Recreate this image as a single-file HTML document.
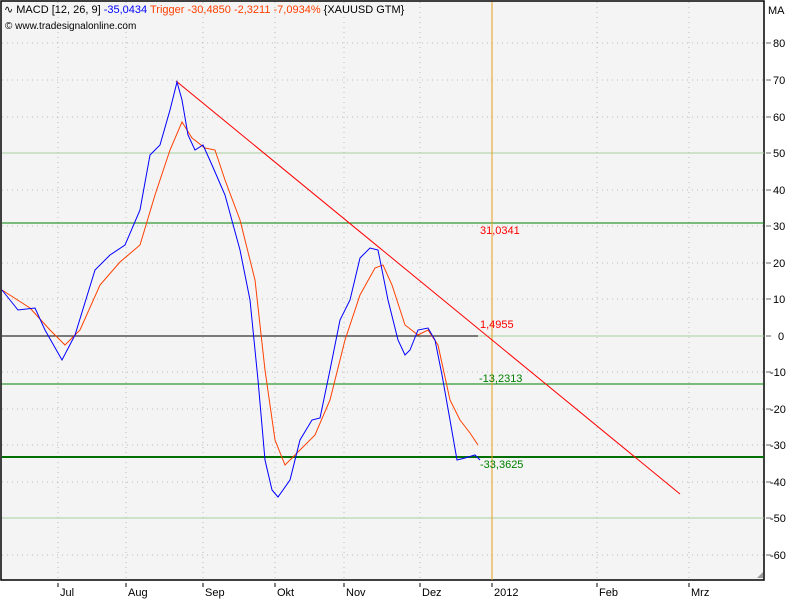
<!DOCTYPE html><html><head><style>body{margin:0;background:#fff;width:800px;height:600px;overflow:hidden;font-family:"Liberation Sans",sans-serif}</style></head><body>
<svg width="800" height="600" xmlns="http://www.w3.org/2000/svg" font-family="Liberation Sans, sans-serif" font-size="11">
<rect x="0" y="0" width="800" height="600" fill="#fff"/>
<rect x="1" y="1" width="763" height="579" fill="#f4f4f4" stroke="#000" stroke-width="1.5"/>
<g stroke="#bbb" stroke-dasharray="1,4">
<line x1="2" x2="764" y1="43" y2="43"/><line x1="2" x2="764" y1="80" y2="80"/><line x1="2" x2="764" y1="117" y2="117"/><line x1="2" x2="764" y1="190" y2="190"/><line x1="2" x2="764" y1="263" y2="263"/><line x1="2" x2="764" y1="299" y2="299"/><line x1="2" x2="764" y1="372" y2="372"/><line x1="2" x2="764" y1="409" y2="409"/><line x1="2" x2="764" y1="445" y2="445"/><line x1="2" x2="764" y1="482" y2="482"/><line x1="2" x2="764" y1="555" y2="555"/><line x1="2" x2="764" y1="226" y2="226"/>
<line x1="58" x2="58" y1="2" y2="580"/><line x1="126" x2="126" y1="2" y2="580"/><line x1="203" x2="203" y1="2" y2="580"/><line x1="275" x2="275" y1="2" y2="580"/><line x1="344" x2="344" y1="2" y2="580"/><line x1="420" x2="420" y1="2" y2="580"/><line x1="597" x2="597" y1="2" y2="580"/><line x1="689" x2="689" y1="2" y2="580"/>
</g>
<line x1="2" x2="764" y1="153" y2="153" stroke="#a8d0a0"/>
<line x1="2" x2="764" y1="518" y2="518" stroke="#a8d0a0"/>
<line x1="478" x2="764" y1="336" y2="336" stroke="#a8d0a0"/>
<line x1="2" x2="478" y1="336" y2="336" stroke="#000"/>
<line x1="2" x2="764" y1="223" y2="223" stroke="#008000"/>
<line x1="2" x2="764" y1="384" y2="384" stroke="#008000"/>
<line x1="2" x2="764" y1="457" y2="457" stroke="#007000" stroke-width="2"/>
<line x1="492" x2="492" y1="2" y2="580" stroke="#e8a020"/>
<line x1="176" y1="81" x2="680" y2="494" stroke="#f00"/>
<polyline fill="none" stroke="#ff4000" points="2,290 30,308 50,330 65,345 80,330 100,285 120,262 140,245 155,195 170,150 182,122 192,138 205,148 215,150 225,180 240,220 255,280 265,370 275,440 285,465 295,455 315,435 330,400 345,340 360,295 375,268 383,265 392,285 405,325 418,335 428,330 438,345 450,400 460,420 470,433 478,445"/>
<polyline fill="none" stroke="#0000ff" points="2,290 10,300 18,310 35,308 45,330 62,360 75,335 95,270 110,255 125,245 140,210 150,155 160,145 170,110 177,82 182,100 188,135 195,150 203,145 212,165 225,195 240,250 250,300 258,380 265,460 272,490 278,497 290,480 300,440 312,420 320,418 330,370 340,320 350,300 360,258 370,248 378,250 388,300 398,340 405,355 410,350 418,330 428,328 435,340 442,375 450,420 457,460 465,458 475,455 480,460"/>
<text x="480" y="234" fill="#f00">31,0341</text>
<text x="480" y="328" fill="#f00">1,4955</text>
<text x="479" y="382" fill="#008000">-13,2313</text>
<text x="480" y="468" fill="#008000">-33,3625</text>
<text x="4" y="13" font-size="11"><tspan fill="#000">∿ MACD [12, 26, 9]</tspan><tspan fill="#0000ff"> -35,0434</tspan><tspan fill="#ff4000"> Trigger -30,4850 -2,3211 -7,0934%</tspan><tspan fill="#000"> {XAUUSD GTM}</tspan></text>
<text x="5" y="29" font-size="10">© www.tradesignalonline.com</text>
<g font-size="11" fill="#000">
<text x="768" y="14">MA</text>
<g stroke="#666"><line x1="766" x2="771" y1="43" y2="43"/><line x1="766" x2="771" y1="80" y2="80"/><line x1="766" x2="771" y1="117" y2="117"/><line x1="766" x2="771" y1="153" y2="153"/><line x1="766" x2="771" y1="190" y2="190"/><line x1="766" x2="771" y1="226" y2="226"/><line x1="766" x2="771" y1="263" y2="263"/><line x1="766" x2="771" y1="299" y2="299"/><line x1="766" x2="771" y1="336" y2="336"/><line x1="766" x2="771" y1="372" y2="372"/><line x1="766" x2="771" y1="409" y2="409"/><line x1="766" x2="771" y1="445" y2="445"/><line x1="766" x2="771" y1="482" y2="482"/><line x1="766" x2="771" y1="518" y2="518"/><line x1="766" x2="771" y1="555" y2="555"/></g>
<text x="773" y="47">80</text><text x="773" y="84">70</text><text x="773" y="121">60</text><text x="773" y="157">50</text><text x="773" y="194">40</text><text x="773" y="230">30</text><text x="773" y="267">20</text><text x="773" y="303">10</text><text x="778" y="340">0</text><text x="770" y="376">-10</text><text x="770" y="413">-20</text><text x="770" y="449">-30</text><text x="770" y="486">-40</text><text x="770" y="522">-50</text><text x="770" y="559">-60</text>
<text x="60" y="596">Jul</text><text x="128" y="596">Aug</text><text x="205" y="596">Sep</text><text x="277" y="596">Okt</text><text x="346" y="596">Nov</text><text x="422" y="596">Dez</text><text x="494" y="596">2012</text><text x="599" y="596">Feb</text><text x="691" y="596">Mrz</text>
</g>
<g stroke="#000"><line x1="58" x2="58" y1="583" y2="587"/><line x1="126" x2="126" y1="583" y2="587"/><line x1="203" x2="203" y1="583" y2="587"/><line x1="275" x2="275" y1="583" y2="587"/><line x1="344" x2="344" y1="583" y2="587"/><line x1="420" x2="420" y1="583" y2="587"/><line x1="492" x2="492" y1="583" y2="587"/><line x1="597" x2="597" y1="583" y2="587"/><line x1="689" x2="689" y1="583" y2="587"/></g>
<path d="M757 578 L763 572 L763 578 Z" fill="#999"/>
</svg>
</body></html>
